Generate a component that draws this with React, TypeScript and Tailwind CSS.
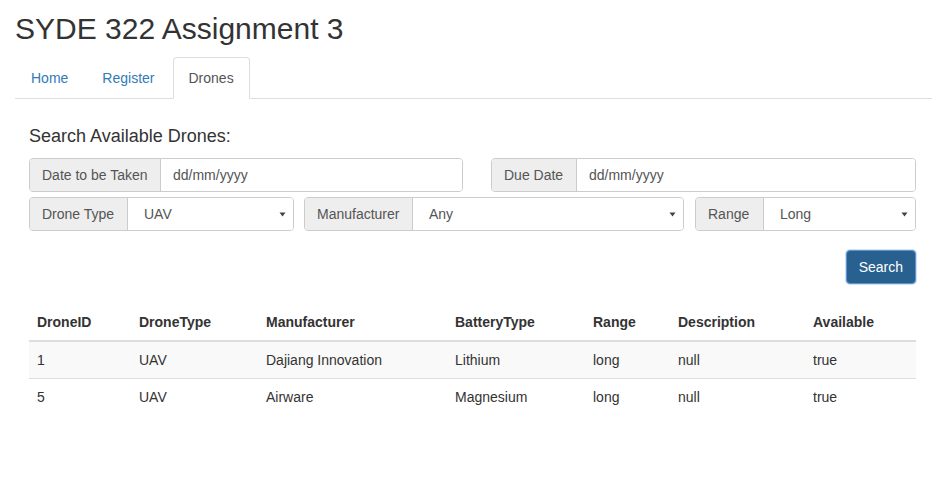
import React from 'react'

const drones = [
  { id: '1', type: 'UAV', maker: 'Dajiang Innovation', battery: 'Lithium', range: 'long', desc: 'null', available: 'true' },
  { id: '5', type: 'UAV', maker: 'Airware', battery: 'Magnesium', range: 'long', desc: 'null', available: 'true' },
]

const cols = [
  { label: 'DroneID', w: 'w-[102px]' },
  { label: 'DroneType', w: 'w-[127px]' },
  { label: 'Manufacturer', w: 'w-[189px]' },
  { label: 'BatteryType', w: 'w-[138px]' },
  { label: 'Range', w: 'w-[85px]' },
  { label: 'Description', w: 'w-[135px]' },
  { label: 'Available', w: 'w-[111px]' },
]

function Caret() {
  return (
    <svg width="7" height="5" viewBox="0 0 7 5" className="shrink-0">
      <path d="M0.5 0.5 L6.5 0.5 L3.5 4.5 Z" fill="#444" />
    </svg>
  )
}

function Addon({ label, w }: { label: string; w: string }) {
  return <div className={`${w} shrink-0 bg-[#eee] border-r border-[#ccc] px-[12px] py-[6px] text-[#555]`}>{label}</div>
}

function DateGroup({ label, addonW, w }: { label: string; addonW: string; w: string }) {
  return (
    <div className={`${w} h-[34px] flex border border-[#ccc] rounded-[4px] overflow-hidden`}>
      <Addon label={label} w={addonW} />
      <div className="flex-1 px-[12px] py-[6px] text-[#555] bg-white">dd/mm/yyyy</div>
    </div>
  )
}

function SelectGroup({ label, value, addonW, w }: { label: string; value: string; addonW: string; w: string }) {
  return (
    <div className={`${w} h-[34px] flex border border-[#ccc] rounded-[4px] overflow-hidden`}>
      <Addon label={label} w={addonW} />
      <div className="flex-1 flex items-center justify-between pl-[16px] pr-[7px] text-[#555] bg-white">
        <span>{value}</span>
        <Caret />
      </div>
    </div>
  )
}

export default function App() {
  const tabs = ['Home', 'Register', 'Drones']
  return (
    <div className="min-h-[502px] bg-white font-['Liberation_Sans',Arial,sans-serif] text-[14px] leading-[20px] text-[#333] px-[15px]">
      <h2 className="pt-[12px] mb-[12px] text-[30px] leading-[33px] font-medium">SYDE 322 Assignment 3</h2>

      <ul className="flex border-b border-[#ddd]">
        {tabs.map(t => t === 'Drones' ? (
          <li key={t} className="-mb-px mr-[2px] px-[15px] py-[10px] border border-[#ddd] border-b-white bg-white rounded-t-[4px] text-[#555]">{t}</li>
        ) : (
          <li key={t} className="-mb-px mr-[2px] px-[15px] py-[10px] border border-transparent text-[#337ab7]">{t}</li>
        ))}
      </ul>

      <div className="pl-[14px] pr-[16px]">
        <h4 className="mt-[27px] mb-[12px] text-[18px] leading-[20px] font-medium">Search Available Drones:</h4>

        <div className="flex gap-[28px]">
          <DateGroup label="Date to be Taken" addonW="w-[131px]" w="w-[434px]" />
          <DateGroup label="Due Date" addonW="w-[85px]" w="w-[425px]" />
        </div>

        <div className="flex mt-[5px]">
          <SelectGroup label="Drone Type" value="UAV" addonW="w-[98px]" w="w-[265px]" />
          <div className="ml-[10px]"><SelectGroup label="Manufacturer" value="Any" addonW="w-[108px]" w="w-[380px]" /></div>
          <div className="ml-[11px]"><SelectGroup label="Range" value="Long" addonW="w-[68px]" w="w-[221px]" /></div>
        </div>

        <div className="flex justify-end mt-[19px]">
          <button className="h-[34px] px-[12px] rounded-[4px] bg-[#286090] border border-[#5e92c9] text-white shadow-[0_0_0_1px_rgba(102,175,233,0.35)]">Search</button>
        </div>

        <table className="mt-[20px] w-[887px] table-fixed border-collapse">
          <thead>
            <tr>
              {cols.map(c => (
                <th key={c.label} className={`${c.w} text-left font-bold p-[8px] border-b-2 border-[#ddd]`}>{c.label}</th>
              ))}
            </tr>
          </thead>
          <tbody>
            {drones.map((d, i) => (
              <tr key={d.id} className={i % 2 === 0 ? 'bg-[#f9f9f9]' : ''}>
                {[d.id, d.type, d.maker, d.battery, d.range, d.desc, d.available].map((v, j) => (
                  <td key={j} className={`p-[8px] ${i > 0 ? 'border-t border-[#ddd]' : ''}`}>{v}</td>
                ))}
              </tr>
            ))}
          </tbody>
        </table>
      </div>
    </div>
  )
}
